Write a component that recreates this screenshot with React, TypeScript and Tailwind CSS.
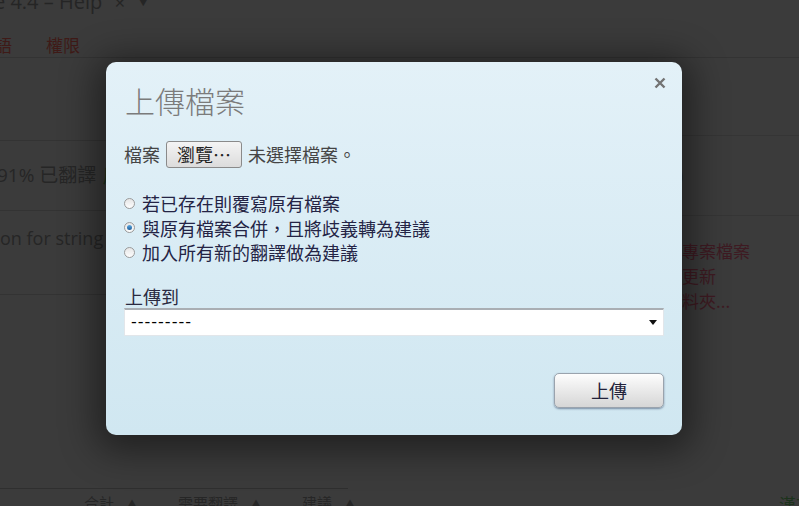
import React from "react";

const cjk = { fontFamily: '"Noto Sans CJK TC", "Noto Sans", sans-serif' };

const Radio = ({ checked }: { checked?: boolean }) => (
  <span className="relative flex h-[11px] w-[11px] shrink-0 items-center justify-center rounded-full border border-[#9a9a9a] bg-gradient-to-b from-[#e6e6e6] to-[#fdfdfd]">
    {checked && (
      <span className="h-[5px] w-[5px] rounded-full bg-gradient-to-b from-[#5aa7e0] to-[#1f5f9a]" />
    )}
  </span>
);

const SortHead = ({ label }: { label: string }) => (
  <span className="flex shrink-0 items-center gap-[14px] whitespace-nowrap">
    <span>{label}</span>
    <span className="text-[8px]">▲</span>
  </span>
);

export default function App() {
  return (
    <div
      className="relative h-[506px] w-[799px] overflow-hidden bg-[#3b3b3b] text-[#222]"
      style={{ fontFamily: '"Open Sans", "Noto Sans CJK TC", sans-serif' }}
    >
      {/* page behind the overlay */}
      <div className="flex h-[58px] flex-col border-b border-[#333]">
        <div className="-mt-[13px] flex items-center gap-3 whitespace-nowrap text-[20px] text-[#252525]">
          <span className="-ml-[6px]">e 4.4 – Help</span>
          <span className="text-[14px]">✕</span>
          <span className="text-[10px]">▼</span>
        </div>
        <div className="mt-[17px] flex gap-[34px] text-[17px] leading-[22px] text-[#3f1a17]" style={cjk}>
          <span className="-ml-[5px]">語</span>
          <span>權限</span>
        </div>
      </div>

      <div className="flex">
        <div className="w-[660px] shrink-0">
          <div className="h-[83px] border-b border-[#333]" />
          <div className="flex h-[70px] items-center whitespace-nowrap border-b border-[#333] text-[19px]">
            <span className="-ml-[3px] text-[#262626]">91% 已翻譯</span>
            <span className="ml-[6px] text-[#1c331c]" style={cjk}>居</span>
          </div>
          <div className="flex h-[84px] items-start border-b border-[#333] pt-[14px] text-[18px] text-[#262626]">
            on for string
          </div>
        </div>
        <div className="flex flex-1 flex-col">
          <div className="h-[78px] border-b border-[#353535]" />
          <div className="flex h-[80px] items-center border-b border-[#353535] text-[18px] text-[#2a2a2a]">
            <span className="ml-[18px]">)</span>
          </div>
          <div
            className="flex flex-col whitespace-nowrap pl-[22px] pt-[22px] text-[17px] leading-[25px] text-[#3e1a22]"
            style={cjk}
          >
            <span>專案檔案</span>
            <span>更新</span>
            <span>料夾...</span>
          </div>
        </div>
      </div>

      <div className="absolute -bottom-[8px] left-0 right-0 flex items-start justify-between">
        <div className="w-[348px] border-t border-[#2f2f2f] pt-[4px]">
          <div className="flex gap-[42px] pl-[84px] text-[15px] leading-[20px] text-[#262626]" style={cjk}>
            <SortHead label="合計" />
            <SortHead label="需要翻譯" />
            <SortHead label="建議" />
          </div>
        </div>
        <span className="mr-[-14px] mt-[6px] whitespace-nowrap text-[17px] leading-[20px] text-[#1c331c]" style={cjk}>
          漢言
        </span>
      </div>

      {/* modal */}
      <div
        className="absolute left-[106px] top-[62px] flex w-[576px] flex-col rounded-[10px] bg-gradient-to-b from-[#e3f1f8] to-[#d0e7f1] px-[18px] pb-[27px] pt-[20px] shadow-[0_6px_36px_10px_rgba(0,0,0,0.45)]"
        style={cjk}
      >
        <button className="absolute right-[16px] top-[15px]">
          <svg width="12" height="12" viewBox="0 0 12 12">
            <path d="M1.5 1.5 L10.5 10.5 M10.5 1.5 L1.5 10.5" stroke="#737373" strokeWidth="2.4" />
          </svg>
        </button>

        <h1 className="pl-[1px] text-[30px] font-light leading-[36px] text-[#7b7b7b]">上傳檔案</h1>

        <div className="mt-[23px] flex h-[27px] items-center whitespace-nowrap text-[18px] text-[#454545]">
          <span>檔案</span>
          <span className="ml-[6px] flex h-[27px] w-[76px] items-center justify-center rounded-[3px] border border-[#8a8a8a] bg-gradient-to-b from-[#f4f4f4] to-[#dcdcdc] text-[18px] text-[#222]">
            瀏覽…
          </span>
          <span className="ml-[6px]">未選擇檔案。</span>
        </div>

        <div className="mt-[23px] flex flex-col text-[18px] leading-[24.5px] text-[#242445]">
          <label className="flex items-center gap-[7px]">
            <Radio />
            <span>若已存在則覆寫原有檔案</span>
          </label>
          <label className="flex items-center gap-[7px]">
            <Radio checked />
            <span>與原有檔案合併，且將歧義轉為建議</span>
          </label>
          <label className="flex items-center gap-[7px]">
            <Radio />
            <span>加入所有新的翻譯做為建議</span>
          </label>
        </div>

        <div className="mt-[20px] pl-[1px] text-[18px] leading-[23px] text-[#2a2a40]">上傳到</div>
        <div className="flex h-[28px] items-center justify-between border border-t-2 border-[#e2e6ea] border-t-[#a9aeb3] bg-white pl-[6px] pr-[6px]">
          <span className="text-[16px] tracking-[1px] text-black" style={{ fontFamily: '"DejaVu Sans", sans-serif' }}>
            ---------
          </span>
          <svg width="8" height="5" viewBox="0 0 8 5">
            <path d="M0 0 H8 L4 5 Z" fill="#111" />
          </svg>
        </div>

        <div className="mt-[37px] flex justify-end">
          <button className="flex h-[35px] w-[110px] items-center justify-center rounded-[5px] border border-[#9aa3ad] bg-gradient-to-b from-[#fdfdfd] to-[#d6d6d6] text-[18px] text-[#22223a] shadow-[0_1px_2px_rgba(60,80,110,0.6)]">
            上傳
          </button>
        </div>
      </div>
    </div>
  );
}
